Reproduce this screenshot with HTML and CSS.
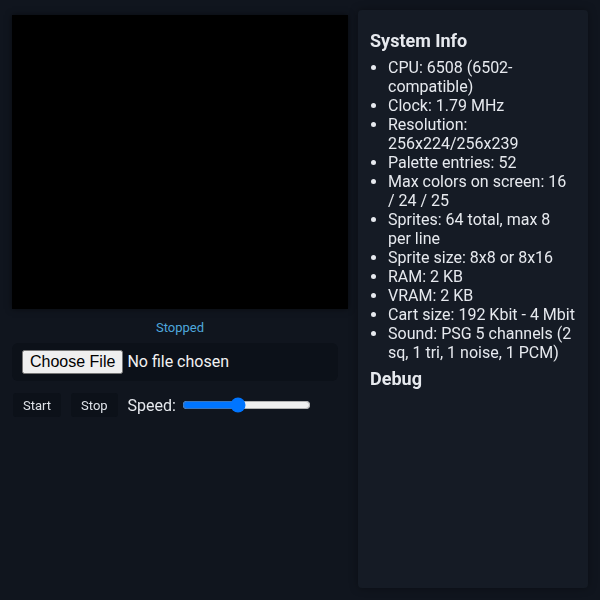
FILE: index.html
```html
<!DOCTYPE html>
<html lang="en">
<head>
    <meta charset="UTF-8">
    <meta name="viewport" content="width=device-width, initial-scale=1.0">
    <title>Emulator</title>
    <link rel="stylesheet" href="styles.css">
</head>
<body>
    <div class="layout">
        <!-- Screen and controls -->
        <div class="main">
            <canvas id="screen" class="screen" width="256" height="224"></canvas>
            <div class="status" id="status">Stopped</div>
            <div class="file-box">
                <input type="file" id="rom">
            </div>
            <div class="controls">
                <button class="ctl" onclick="start()">Start</button>
                <button class="ctl" onclick="stop()">Stop</button>
                <label class="speed">Speed: <input type="range" id="speed" min="0.25" max="2" step="0.05" value="1"></label>
            </div>
        </div>
        <!-- Side panel -->
        <div class="panel">
            <h3>System Info</h3>
            <ul>
                <li>CPU: 6508 (6502-compatible)</li>
                <li>Clock: 1.79 MHz</li>
                <li>Resolution: 256x224/256x239</li>
                <li>Palette entries: 52</li>
                <li>Max colors on screen: 16 / 24 / 25</li>
                <li>Sprites: 64 total, max 8 per line</li>
                <li>Sprite size: 8x8 or 8x16</li>
                <li>RAM: 2 KB</li>
                <li>VRAM: 2 KB</li>
                <li>Cart size: 192 Kbit - 4 Mbit</li>
                <li>Sound: PSG 5 channels (2 sq, 1 tri, 1 noise, 1 PCM)</li>
            </ul>
            <h3>Debug</h3>
        </div>
    </div>
    <script>
        var ctx = document.getElementById('screen').getContext('2d');
        ctx.fillStyle = '#000';
        ctx.fillRect(0, 0, 256, 224);

        function start() {
            document.getElementById('status').textContent = 'Running';
        }

        function stop() {
            document.getElementById('status').textContent = 'Stopped';
        }
    </script>
</body>
</html>
```

FILE: styles.css
```css
body {
    font-family: Roboto, 'Liberation Sans', sans-serif;
    margin: 0;
    padding: 12px;
    background-color: #10151e;
    color: #e6e9ee;
    height: 100vh;
    box-sizing: border-box;
}

.layout {
    display: grid;
    grid-template-columns: 336px 230px;
    gap: 10px;
    height: 100%;
}

.screen {
    display: block;
    width: 336px;
    height: 294px;
    margin-top: 3px;
    background: #000;
    box-shadow: 0 0 6px rgba(0, 0, 0, 0.5);
}

.status {
    text-align: center;
    font-size: 13px;
    color: #4ea7dc;
    margin: 11px 0 8px;
}

.file-box {
    background-color: #0c1119;
    border-radius: 6px;
    padding: 7px 10px;
    margin-right: 10px;
    font-size: 16px;
}

.file-box input[type=file] {
    font-family: inherit;
    font-size: 16px;
    color: #f2f2f2;
}

.controls {
    display: flex;
    align-items: center;
    gap: 10px;
    margin-top: 12px;
    padding-left: 1px;
}

.ctl {
    font-family: inherit;
    font-size: 13px;
    color: #dde1e7;
    background-color: #0c1119;
    border: none;
    border-radius: 3px;
    padding: 5px 10px;
    height: 24px;
    cursor: pointer;
}

.speed {
    display: flex;
    align-items: center;
    gap: 4px;
    font-size: 16px;
}

.panel {
    background-color: #151b25;
    border-radius: 4px;
    padding: 14px 12px 12px;
    box-shadow: 0 0 8px rgba(0, 0, 0, 0.35);
    margin-top: -2px;
}

.panel h3 {
    font-size: 18px;
    margin: 6px 0;
    line-height: 22px;
}

.panel ul {
    margin: 0;
    padding-left: 18px;
    font-size: 16px;
    line-height: 19px;
}
```
